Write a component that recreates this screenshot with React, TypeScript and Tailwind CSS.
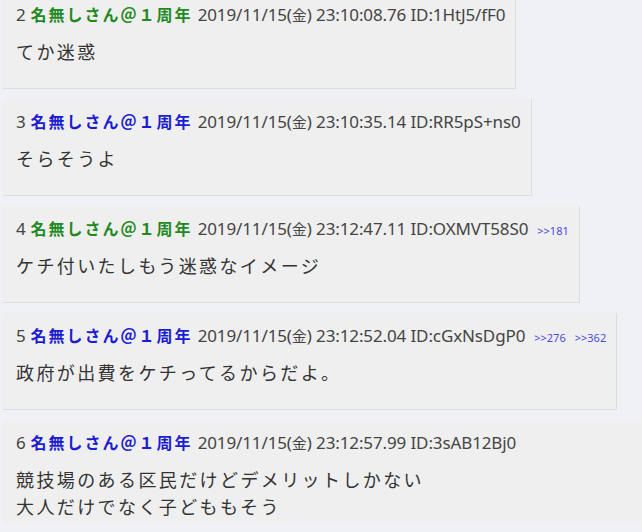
import React from "react"

type Post = {
  no: number
  nameColor: "green" | "blue"
  time: string
  id: string
  refs?: string[]
  lines: string[]
}

const posts: Post[] = [
  { no: 2, nameColor: "green", time: "23:10:08.76", id: "1HtJ5/fF0", lines: ["てか迷惑"] },
  { no: 3, nameColor: "blue", time: "23:10:35.14", id: "RR5pS+ns0", lines: ["そらそうよ"] },
  { no: 4, nameColor: "green", time: "23:12:47.11", id: "OXMVT58S0", refs: ["181"], lines: ["ケチ付いたしもう迷惑なイメージ"] },
  { no: 5, nameColor: "blue", time: "23:12:52.04", id: "cGxNsDgP0", refs: ["276", "362"], lines: ["政府が出費をケチってるからだよ。"] },
  {
    no: 6,
    nameColor: "blue",
    time: "23:12:57.99",
    id: "3sAB12Bj0",
    lines: ["競技場のある区民だけどデメリットしかない", "大人だけでなく子どももそう"],
  },
]

const latin = { fontFamily: '"Noto Sans", "Noto Sans CJK JP", sans-serif' }
const jp = { fontFamily: '"Noto Sans CJK JP", sans-serif' }

function PostBox({ post, last }: { post: Post; last?: boolean }) {
  return (
    <div
      className={
        last
          ? "ml-[3px] bg-[#efefef] pl-[13px] pr-[10px] pt-[12px] pb-[4px]"
          : "ml-[3px] w-fit bg-[#efefef] border-r border-b border-[#dddddd] pl-[13px] pr-[10px] pt-[12px] pb-[23px]"
      }
    >
      {/* header line */}
      <div
        className="flex items-baseline h-[20px] leading-[20px] text-[17px] tracking-[-0.12px] text-[#444] whitespace-nowrap"
        style={latin}
      >
        <span>{post.no}</span>
        <span
          className={
            post.nameColor === "green"
              ? "ml-[5px] font-bold text-[16px] tracking-[2px] text-[#1f8a1f]"
              : "ml-[5px] font-bold text-[16px] tracking-[2px] text-[#1c1cd2]"
          }
          style={jp}
        >
          名無しさん＠１周年
        </span>
        <span className="ml-[5px]">
          2019/11/15(<span style={jp} className="text-[15px]">金</span>) {post.time} ID:{post.id}
        </span>
        {post.refs?.map((r) => (
          <span key={r} className="ml-[9px] text-[11px] tracking-normal text-[#4a4ae0]">
            &gt;&gt;{r}
          </span>
        ))}
      </div>
      {/* body */}
      <div className="mt-[14px] text-[18px] leading-[27px] tracking-[2.4px] text-[#333]" style={jp}>
        {post.lines.map((l, i) => (
          <div key={i}>{l}</div>
        ))}
      </div>
    </div>
  )
}

export default function App() {
  return (
    <div className="w-[642px] h-[532px] overflow-hidden bg-[#f0f1f6]">
      <div className="-mt-[8px] flex flex-col gap-[10px]">
        {posts.map((p, i) => (
          <PostBox key={p.no} post={p} last={i === posts.length - 1} />
        ))}
      </div>
    </div>
  )
}
